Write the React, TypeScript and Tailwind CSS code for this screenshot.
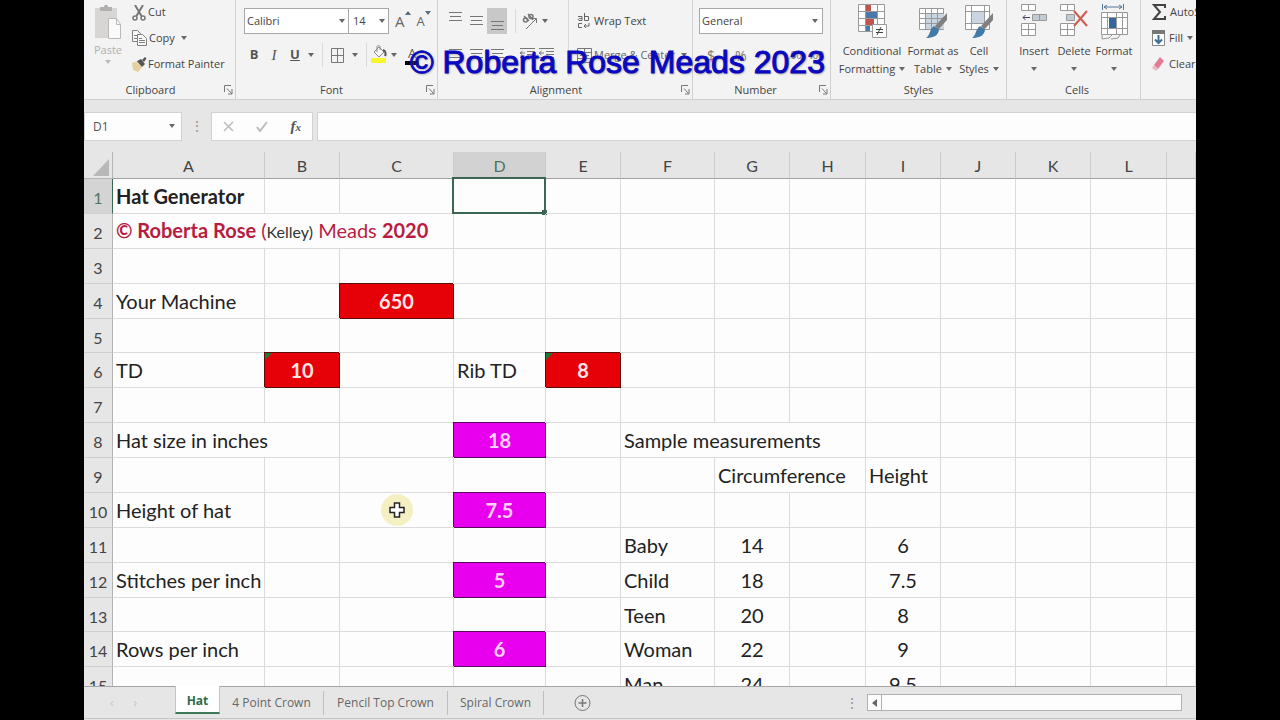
import type { ReactNode } from 'react';

type IconProps = { className?: string };

const Caret = ({ className = '' }: IconProps) => (
  <svg className={`shrink-0 ${className}`} width="6" height="4" viewBox="0 0 6 4" fill="#666">
    <path d="M0 0h6L3 4z" />
  </svg>
);

const Launcher = () => (
  <svg width="9" height="10" viewBox="0 0 9 10" fill="none" stroke="#777">
    <path d="M.5 7V.5H7M3 3.500l4.500 5M8 4v5H4" />
  </svg>
);

const PasteIcon = () => (
  <svg width="28" height="36" viewBox="0 0 28 36" fill="none">
    <path d="M1 4h22v30H1z" fill="#d8d5d5" />
    <path d="M6 7V3h4c0-3 4-3 4 0h4v4z" fill="#b0b0b0" />
    <path d="M14.500 14.500h8l4 6v14h-12z" fill="#fafafa" stroke="#b8b8b8" />
    <path d="M22.500 14.500v6h4" stroke="#b8b8b8" />
  </svg>
);

const CutIcon = () => (
  <svg width="14" height="16" viewBox="0 0 14 16" fill="none" stroke="#777" strokeWidth="1.500">
    <path d="M3 0l6.500 11M11 0L4.500 11" strokeWidth="2" />
    <circle cx="3" cy="13" r="2" />
    <circle cx="11" cy="13" r="2" />
  </svg>
);

const CopyIcon = () => (
  <svg width="15" height="16" viewBox="0 0 15 16" fill="#f8f8f8" stroke="#808080">
    <path d="M.5.5h5l3 3v8h-8zM2 5.500h4M2 8.500h4" />
    <path d="M5.500 4.500h5l4 4v7h-9z" />
    <path d="M7 8.500h3M7 10.500h6M7 12.500h6" />
  </svg>
);

const PainterIcon = () => (
  <svg width="15" height="15" viewBox="0 0 15 15">
    <path d="M0 6l6-2 4 6-4 5-5-2z" fill="#e3cfa0" />
    <path d="M5 4l4-2 4 5-3 3z" fill="#555" />
    <path d="M10 3l3-3 1.500 1.500L12 5z" fill="#555" />
  </svg>
);

const BucketIcon = () => (
  <svg width="16" height="20" viewBox="0 0 16 20" fill="none" stroke="#888">
    <path d="M3 7l5-5 5 5-5 5z" fill="#f6f6f6" />
    <path d="M6 7V2c0-2 3-2 3 0v3" />
    <path d="M12 5c3 1 3 4 2 6" stroke="#555" strokeWidth="2" />
    <path d="M0 13h15v5H0z" fill="#f7f52b" stroke="none" />
  </svg>
);

const FontSizeIcon = ({ down = false }: { down?: boolean }) => (
  <svg width="6" height="4" viewBox="0 0 6 4" fill="#5a6a80">
    <path d={down ? 'M0 0h6L3 4z' : 'M0 4h6L3 0z'} />
  </svg>
);

const Lines = ({ ys }: { ys: number[] }) => (
  <svg width="13" height="20" viewBox="0 0 13 20" stroke="#777">
    {ys.map((y, i) => (
      <path key={y} d={i === 1 ? `M1 ${y}.5h11` : `M0 ${y}.5h13`} />
    ))}
  </svg>
);

const IndentIcon = () => (
  <svg width="15" height="12" viewBox="0 0 15 12" fill="none" stroke="#777">
    <path d="M0 .5h15M7 3.500h8M7 6.500h8M0 9.500h15M0 5h5M2.500 3L0 5l2.500 2" />
  </svg>
);

const OrientationIcon = () => (
  <svg className="overflow-visible" width="16" height="17" viewBox="0 0 16 17" fill="none" stroke="#777">
    <circle cx="3.500" cy="7" r="2" strokeWidth="1.500" />
    <path d="M2 3l5 5M6 1l5 6" strokeWidth="1.500" />
    <circle cx="9" cy="3.500" r="2" strokeWidth="1.500" />
    <path d="M4 16L14 6M10.500 5.500h4V10" />
  </svg>
);

const ConditionalIcon = () => (
  <svg width="29" height="35" viewBox="0 0 29 35" fill="none" stroke="#999">
    <path d="M.5.5h26v27H.5z" fill="#fff" />
    <path d="M8 1h5v6H8zM8 14h8v7H8z" fill="#c4534d" stroke="none" />
    <path d="M8 8h11v6H8zM8 21h4v6H8z" fill="#4c79ac" stroke="none" />
    <path d="M.5 7.500h26M.5 14.500h26M.5 21.500h26M7.500 1v27M19.500 1v27" />
    <path d="M14.500 20.500h14v13h-14z" fill="#fff" />
    <path d="M18 25.500h7M18 28.500h7M23 23l-4 8" stroke="#444" />
  </svg>
);

const BrushGridIcon = ({ plain = false }: { plain?: boolean }) => (
  <svg width="29" height="35" viewBox="0 0 29 35" fill="none" stroke="#999">
    <path d={plain ? 'M.5 1.500h24v24H.5z' : 'M.5 4.500h24v21H.5z'} fill="#fff" />
    <path d={plain ? 'M6 7h13v12H6z' : 'M7 10h18v15H7z'} fill="#c9d5e0" stroke="none" />
    <path d={plain ? 'M.5 7.500h24M.5 19.500h24M6.500 2v23M19.500 2v23' : 'M.5 9.500h24M.5 14.500h24M.5 19.500h24M6.500 5v20M12.500 5v20M18.500 5v20'} />
    <path d="M28 9v7l-9 10-3-4z" fill="#808080" stroke="none" />
    <path d="M15 22l5 4c-1 6-6 8-13 8 4-2 3-8 8-12z" fill="#437aa5" stroke="none" />
  </svg>
);

const InsertIcon = () => (
  <svg width="26" height="33" viewBox="0 0 26 33" fill="#fff" stroke="#999">
    <path d="M.5.5h14v6H.5zM7.500.5v6M.5 19.500h14v12H.5zM7.500 19.500v12M.5 25.500h14" />
    <path d="M11.500 10.500h14v6h-14zM18.500 10.500v6" fill="#c3ccd5" />
    <path d="M9 13.500H2M4.500 11L2 13.500 4.500 16" stroke="#446" fill="none" />
  </svg>
);

const DeleteIcon = () => (
  <svg width="28" height="33" viewBox="0 0 28 33" fill="#fff" stroke="#999">
    <path d="M.5.5h14v6H.5zM7.500.5v6M.5 19.500h14v12H.5zM7.500 19.500v12M.5 25.500h14" />
    <path d="M6.500 10.500h8v6h-8z" fill="#c3ccd5" />
    <path d="M14 7l13 15M27 7L14 22" stroke="#cf5b50" strokeWidth="2" />
  </svg>
);

const FormatIcon = () => (
  <svg width="27" height="36" viewBox="0 0 27 36" fill="none" stroke="#999">
    <path d="M1.500 0v6M22.500 0v6M3 3h18M6 1L3 3l3 2M18 1l3 2-3 2" stroke="#547899" />
    <path d="M.5 8.500h26v22H.5z" fill="#fff" />
    <path d="M.5 13.500h26M.5 24.500h26M6.500 8v22M15.500 8v22M21.500 8v22" />
    <path d="M8 14h7v10H8z" fill="#33689e" stroke="none" />
    <path d="M1 31v4l7-1 3-3M10 35l7-1 2-3" />
  </svg>
);

const SigmaIcon = () => (
  <svg width="14" height="17" viewBox="0 0 14 17" fill="none" stroke="#444" strokeWidth="2">
    <path d="M13 4V1H2l6 7-6 7h11v-3" />
  </svg>
);

const FillIcon = () => (
  <svg width="13" height="16" viewBox="0 0 13 16" fill="none" stroke="#888">
    <path d="M.5.5h12v15H.5z" fill="#fff" />
    <path d="M0 0h13v4H0z" fill="#777" stroke="none" />
    <path d="M6.500 5v8M3 9.500L6.500 13 10 9.500" stroke="#3c709b" strokeWidth="2" />
  </svg>
);

const EraserIcon = () => (
  <svg width="13" height="14" viewBox="0 0 13 14">
    <path d="M8 0l4 4-6 8-4-4z" fill="#e07c94" />
    <path d="M2 8l4 4-2 2-4-3z" fill="#eeb8c4" />
  </svg>
);

type GroupProps = { title: string; className: string; launcher?: boolean; children: ReactNode };

const Group = ({ title, className, launcher = false, children }: GroupProps) => (
  <section className={`flex flex-col shrink-0 h-[99px] border-r border-[#d0d0d0] ${className}`}>
    <div className="h-[82px]">{children}</div>
    <div className="relative flex justify-center h-4 leading-4">
      <span className={launcher ? 'pr-[18px]' : ''}>{title}</span>
      {launcher ? (
        <button aria-label={`${title} settings`} className="absolute right-0.5 top-[3px]">
          <Launcher />
        </button>
      ) : null}
    </div>
  </section>
);

type BigButtonProps = { icon: ReactNode; lines: string[]; className: string };

const BigButton = ({ icon, lines, className }: BigButtonProps) => (
  <button className={`flex flex-col items-center pt-1 leading-[18px] ${className}`}>
    <span className="h-[38px] flex items-start">{icon}</span>
    <span>{lines[0]}</span>
    <span className="flex items-center gap-1 min-h-[18px]">
      {lines[1]}
      <Caret />
    </span>
  </button>
);

const Separator = () => <span className="w-px h-6 bg-[#dadada]" />;

const Ribbon = () => (
  <header className="relative flex h-[100px] overflow-hidden bg-[#f3f3f3] border-b border-[#d0d0d0]">
    <Group title="Clipboard" launcher className="w-[152px]">
      <div className="flex">
        <button className="flex flex-col items-center w-12 pt-1 text-[#b0b0b0]">
          <PasteIcon />
          <span className="leading-5">Paste</span>
          <span className="opacity-40"><Caret /></span>
        </button>
        <div className="flex flex-col">
          <button className="flex items-center gap-0.5 h-[25px]"><CutIcon />Cut</button>
          <button className="flex items-center gap-0.5 h-[26px]"><CopyIcon />Copy<Caret className="ml-1" /></button>
          <button className="flex items-center gap-px h-[26px]"><PainterIcon />Format Painter</button>
        </div>
      </div>
    </Group>

    <Group title="Font" launcher className="w-[202px] pl-2">
      <div className="flex items-center pt-2">
        <label className="relative">
          <select aria-label="Font name" className="block appearance-none w-[105px] h-[26px] pl-0.5 bg-white border border-[#a8a8a8]">
            <option>Calibri</option>
          </select>
          <Caret className="absolute right-1 top-[11px]" />
        </label>
        <label className="relative">
          <select aria-label="Font size" className="block appearance-none w-10 h-[26px] pl-1 bg-white border border-l-0 border-[#a8a8a8]">
            <option>14</option>
          </select>
          <Caret className="absolute right-1 top-[11px]" />
        </label>
        <button aria-label="Increase font size" className="flex pl-[6px] text-[15px] leading-5 text-[#666]">A<FontSizeIcon /></button>
        <button aria-label="Decrease font size" className="flex pl-[6px] text-[13px] leading-5 text-[#666]">A<FontSizeIcon down /></button>
      </div>
      <div className="flex items-center h-[42px] text-[13px] text-[#555]">
        <button className="w-5 font-bold">B</button>
        <button className="w-5 italic font-['Liberation_Serif',serif] text-[15px]">I</button>
        <button className="w-[22px] font-bold underline">U</button>
        <Caret className="ml-0.5" />
        <span className="w-2" />
        <Separator />
        <svg className="mx-2" width="13" height="15" viewBox="0 0 13 15" fill="none" stroke="#777">
          <path d="M.5.5h12v14H.5zM6.500 0v15M0 7.500h13" />
        </svg>
        <Caret />
        <span className="w-2" />
        <Separator />
        <span className="w-1" />
        <BucketIcon />
        <Caret className="ml-1" />
        <button className="ml-2 w-[14px] leading-4 border-b-4 border-black">A</button>
      </div>
    </Group>

    <Group title="Alignment" launcher className="w-[255px]">
      <div className="flex">
        <div className="w-[131px] h-[76px] border-r border-[#dadada]">
          <div className="flex items-center h-[42px] pl-[11px]">
            <Lines ys={[1, 5, 9]} />
            <span className="w-2" />
            <Lines ys={[5, 9, 13]} />
            <span className="flex items-center justify-center mx-1 w-5 h-[26px] bg-[#c8c8c8]"><Lines ys={[10, 14, 18]} /></span>
            <span className="w-1" />
            <Separator />
            <span className="w-[6px]" />
            <OrientationIcon />
            <Caret className="ml-1" />
          </div>
          <div className="flex items-center h-6 pl-[11px]">
            <Lines ys={[5, 9, 13]} />
            <span className="w-2" />
            <Lines ys={[5, 9, 13]} />
            <span className="w-2" />
            <Lines ys={[5, 9, 13]} />
            <span className="w-4" />
            <IndentIcon />
            <span className="w-1" />
            <IndentIcon />
          </div>
        </div>
        <div className="pl-2">
          <button className="flex items-center h-[42px]">
            <svg className="mr-1" width="13" height="17" viewBox="0 0 13 17" fill="none" stroke="#666">
              <path d="M1 3.500h4v4H2c-2-2 1-2 3-2M7.500 0v7.500h4v-4h-4M5 10.500H1.500v4H5M12 10v3H7.500M9 11l-2 2 2 2" />
            </svg>
            Wrap Text
          </button>
          <button className="flex items-center gap-0.5 h-[26px] text-[#666]">
            <svg width="15" height="15" viewBox="0 0 15 15" fill="none" stroke="#777">
              <path d="M.5.5h14v14H.5zM0 4.500h15M0 10.500h15M7.500 0v4M7.500 11v4M3 7.500h9" />
            </svg>
            Merge &amp; Center
            <Caret className="ml-1" />
          </button>
        </div>
      </div>
    </Group>

    <Group title="Number" launcher className="w-[138px] pl-[6px]">
      <label className="relative block pt-2">
        <select aria-label="Number format" className="block appearance-none w-[124px] h-[26px] pl-0.5 bg-white border border-[#a8a8a8]">
          <option>General</option>
        </select>
        <Caret className="absolute right-3 top-[19px]" />
      </label>
      <div className="flex items-center h-[42px] pl-2 text-[14px] text-[#777]">
        <button className="w-7 text-left">$</button>
        <button className="w-7 text-left">%</button>
        <button className="w-5 text-left">,</button>
        <button className="w-6 text-[10px]">.00</button>
        <button className="w-5 text-[10px]">.00</button>
      </div>
    </Group>

    <Group title="Styles" className="w-[176px]">
      <div className="flex pl-px">
        <BigButton icon={<ConditionalIcon />} lines={['Conditional', 'Formatting']} className="w-[80px]" />
        <BigButton icon={<BrushGridIcon />} lines={['Format as', 'Table']} className="w-[42px] whitespace-nowrap" />
        <BigButton icon={<BrushGridIcon plain />} lines={['Cell', 'Styles']} className="w-[50px]" />
      </div>
    </Group>

    <Group title="Cells" className="w-[134px] pl-[7px]">
      <div className="flex">
        <BigButton icon={<InsertIcon />} lines={['Insert', '']} className="w-10" />
        <BigButton icon={<DeleteIcon />} lines={['Delete', '']} className="w-10" />
        <BigButton icon={<FormatIcon />} lines={['Format', '']} className="w-10" />
      </div>
    </Group>

    <div className="flex flex-col pl-[11px] whitespace-nowrap">
      <button className="flex items-center gap-1 h-[25px]"><SigmaIcon />AutoSum</button>
      <button className="flex items-center gap-1 h-[26px]"><FillIcon />Fill<Caret /></button>
      <button className="flex items-center gap-1 h-[26px]"><EraserIcon />Clear</button>
    </div>

    <p className="absolute left-[326px] top-11 whitespace-nowrap font-['Liberation_Sans',sans-serif] text-[32px] leading-9 text-[#0a08c0] [-webkit-text-stroke:1px_#0a08c0] [text-shadow:1px_1px_2px_#888]">
      © Roberta Rose Meads 2023
    </p>
  </header>
);

const FormulaBar = () => (
  <div className="flex h-[52px] pt-3 pb-[11px]">
    <label className="relative flex items-center w-[98px] bg-[#fdfdfd] border border-[#d2d2d2]">
      <input aria-label="Name box" defaultValue="D1" className="w-full pl-2 text-[12px] text-[#555] outline-none" />
      <Caret className="absolute right-[6px] top-[11px]" />
    </label>
    <span className="w-[29px] text-center text-[14px] leading-7 text-[#999]">⋮</span>
    <div className="flex items-center justify-around w-[102px] bg-[#fdfdfd] border border-[#d2d2d2]">
      <button aria-label="Cancel">
        <svg width="11" height="11" viewBox="0 0 11 11" stroke="#bbb" strokeWidth="1.500"><path d="M1 1l9 9M10 1l-9 9" /></svg>
      </button>
      <button aria-label="Enter">
        <svg width="12" height="11" viewBox="0 0 12 11" fill="none" stroke="#bbb" strokeWidth="2"><path d="M1 6l3 4 7-9" /></svg>
      </button>
      <button className="font-['Liberation_Serif',serif] italic font-bold text-[15px] leading-5 text-[#555]">
        f<span className="text-[11px]">x</span>
      </button>
    </div>
    <input aria-label="Formula" className="flex-1 min-w-0 ml-1 bg-[#fdfdfd] border border-r-0 border-[#d2d2d2] outline-none" />
  </div>
);

const columns = [
  { name: 'A', width: 'w-[152px]' },
  { name: 'B', width: 'w-[75px]' },
  { name: 'C', width: 'w-[114px]' },
  { name: 'D', width: 'w-[92px]' },
  { name: 'E', width: 'w-[75px]' },
  { name: 'F', width: 'w-[94px]' },
  { name: 'G', width: 'w-[75px]' },
  { name: 'H', width: 'w-[76px]' },
  { name: 'I', width: 'w-[75px]' },
  { name: 'J', width: 'w-[75px]' },
  { name: 'K', width: 'w-[75px]' },
  { name: 'L', width: 'w-[76px]' },
  { name: '', width: '' },
];

type Cell = { value: ReactNode; kind?: 'red' | 'pink' | 'center' | 'bold'; span?: number; flag?: boolean };

const cells: Record<string, Cell> = {
  A1: { value: 'Hat Generator', kind: 'bold' },
  A2: {
    span: 3,
    value: (
      <span className="text-[#b81c42]">
        <b>© Roberta Rose</b> (<span className="text-[16px] text-[#333]">Kelley)</span> Meads <b>2020</b>
      </span>
    ),
  },
  A4: { value: 'Your Machine' },
  C4: { value: '650', kind: 'red' },
  A6: { value: 'TD' },
  B6: { value: '10', kind: 'red', flag: true },
  D6: { value: 'Rib TD' },
  E6: { value: '8', kind: 'red', flag: true },
  A8: { value: 'Hat size in inches', span: 2 },
  D8: { value: '18', kind: 'pink' },
  F8: { value: 'Sample measurements', span: 3 },
  G9: { value: 'Circumference', span: 2 },
  I9: { value: 'Height' },
  A10: { value: 'Height of hat' },
  D10: { value: '7.5', kind: 'pink' },
  A12: { value: 'Stitches per inch' },
  D12: { value: '5', kind: 'pink' },
  A14: { value: 'Rows per inch' },
  D14: { value: '6', kind: 'pink' },
};

const samples = [
  ['Baby', '14', '6'],
  ['Child', '18', '7.5'],
  ['Teen', '20', '8'],
  ['Woman', '22', '9'],
  ['Man', '24', '9.5'],
];

samples.forEach(([who, around, height], i) => {
  cells[`F${i + 11}`] = { value: who };
  cells[`G${i + 11}`] = { value: around, kind: 'center' };
  cells[`I${i + 11}`] = { value: height, kind: 'center' };
});

const kinds = {
  red: 'text-center text-[#ffe4e4] font-bold bg-[#e60008] border-[#5c0a0a] shadow-[-1px_-1px_0_#5c0a0a]',
  pink: 'text-center text-[#ffd0ff] font-bold bg-[#e800ee] border-[#5a0a5c] shadow-[-1px_-1px_0_#5a0a5c]',
  center: 'text-center border-[#dcdcdc]',
  bold: 'font-bold border-[#dcdcdc]',
};

const Pointer = () => (
  <span className="absolute inset-0 flex items-center justify-center">
    <svg width="34" height="34" viewBox="0 0 34 34">
      <circle cx="17" cy="17" r="16" fill="#f5f0c4" />
      <path d="M14.500 10h5v4.500H24v5h-4.500V24h-5v-4.500H10v-5h4.500z" fill="#fff" stroke="#222" strokeWidth="1.500" />
    </svg>
  </span>
);

const Row = ({ row }: { row: number }) => {
  const tds: ReactNode[] = [];
  for (let c = 0; c < columns.length; c += 1) {
    const id = `${columns[c].name}${row}`;
    const cell = cells[id];
    tds.push(
      <td
        key={c}
        colSpan={cell?.span}
        className={`relative px-[3px] border-r border-b ${cell?.kind ? kinds[cell.kind] : 'border-[#dcdcdc]'}`}
      >
        {cell?.value}
        {cell?.flag ? (
          <svg className="absolute left-0 top-0" width="7" height="7" viewBox="0 0 7 7" fill="#1d7a34"><path d="M0 0h7L0 7z" /></svg>
        ) : null}
        {id === 'D1' ? (
          <span className="absolute -left-0.5 -top-0.5 -right-px -bottom-px border-2 border-[#3b6653]">
            <span className="absolute -right-[3px] -bottom-[3px] size-[5px] bg-[#3b6653]" />
          </span>
        ) : null}
        {id === 'C10' ? <Pointer /> : null}
      </td>,
    );
    if (cell?.span) c += cell.span - 1;
  }

  return (
    <tr className={row % 8 === 5 ? 'h-[34px]' : 'h-[35px]'}>
      <th
        scope="row"
        className={`pt-1 text-[16px] font-normal border-r border-b border-b-[#cfcfcf] ${
          row === 1 ? 'bg-[#d4d4d4] text-[#4e7562] border-r-[#3b6653]' : 'bg-[#e6e6e6] text-[#444] border-r-[#b4b4b4]'
        }`}
      >
        {row}
      </th>
      {tds}
    </tr>
  );
};

const Sheet = () => (
  <main className="flex-1 min-h-0 overflow-hidden">
    <table className="table-fixed w-full border-separate border-spacing-0 whitespace-nowrap font-[Lato,sans-serif] text-[20px] leading-6 text-[#222]">
      <colgroup>
        <col className="w-[29px]" />
        {columns.map((col) => (
          <col key={col.name} className={col.width} />
        ))}
      </colgroup>
      <thead>
        <tr className="h-[27px] text-[16px]">
          <th className="border-r border-b border-[#b4b4b4]">
            <svg className="ml-auto mr-[3px] mt-1" width="16" height="17" viewBox="0 0 16 17" fill="#b8b8b8"><path d="M16 0v17H0z" /></svg>
          </th>
          {columns.map((col) => (
            <th
              key={col.name}
              scope="col"
              className={`pt-0.5 font-normal border-r border-b border-r-[#cbcbcb] border-b-[#a0a0a0] ${col.name === 'D' ? 'bg-[#d2d2d2] text-[#4e7562]' : 'text-[#444]'}`}
            >
              {col.name}
            </th>
          ))}
        </tr>
      </thead>
      <tbody className="bg-[#fdfdfd]">
        {Array.from({ length: 15 }, (_, i) => (
          <Row key={i} row={i + 1} />
        ))}
      </tbody>
    </table>
  </main>
);

const tabs = [
  { name: '4 Point Crown', width: 'w-[104px]' },
  { name: 'Pencil Top Crown', width: 'w-[124px]' },
  { name: 'Spiral Crown', width: 'w-[96px]' },
];

const TabBar = () => (
  <footer className="h-[34px] border-t border-[#a6a6a6] text-[12px] text-[#666]">
    <nav className="flex items-center h-8 border-b border-[#c4c4c4]">
      <div className="flex justify-center gap-5 w-[91px] pr-3 text-[#c4c4c4]">
        <button>‹</button>
        <button>›</button>
      </div>
      <button className="self-start w-[45px] h-7 -mt-px pt-1 bg-white border-x border-[#c4c4c4] border-b-2 border-b-[#3b7a58] font-bold text-[#2b6b4a]">
        Hat
      </button>
      {tabs.map((tab) => (
        <button key={tab.name} className={`h-6 border-r border-[#c0c0c0] ${tab.width}`}>{tab.name}</button>
      ))}
      <button aria-label="New sheet" className="ml-[30px]">
        <svg width="17" height="18" viewBox="0 0 17 18" fill="none" stroke="#777">
          <circle cx="8.500" cy="9" r="7.500" />
          <path d="M8.500 5v8M4.500 9h8" strokeWidth="1.500" />
        </svg>
      </button>
      <span className="ml-auto text-[14px] text-[#999]">⋮</span>
      <div className="flex w-[315px] h-[17px] ml-2 mr-[14px] bg-[#fdfdfd] border border-[#b0b0b0]">
        <button aria-label="Scroll left" className="flex items-center justify-center w-[14px] border-r border-[#b0b0b0]">
          <svg width="5" height="8" viewBox="0 0 5 8" fill="#666"><path d="M5 0v8L0 4z" /></svg>
        </button>
      </div>
    </nav>
  </footer>
);

const App = () => (
  <div className="h-screen px-[84px] bg-black overflow-hidden">
    <div className="flex flex-col h-full overflow-hidden bg-[#e6e6e6] font-['Open_Sans',sans-serif] text-[11px] text-[#444]">
      <Ribbon />
      <FormulaBar />
      <Sheet />
      <TabBar />
    </div>
  </div>
);

export default App;
